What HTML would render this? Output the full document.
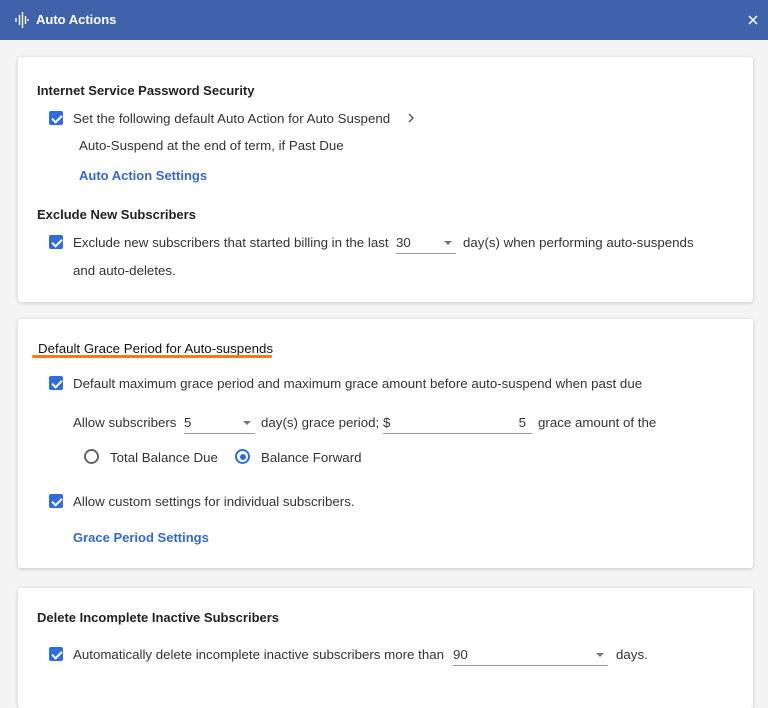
<!DOCTYPE html>
<html><head><style>
*{margin:0;padding:0;box-sizing:border-box}
body{width:768px;height:686px;overflow:hidden;background:#f4f4f4;font-family:"Liberation Sans",sans-serif;font-size:13.3px;color:#333;position:relative}
.hdr{position:absolute;left:0;top:0;width:768px;height:40px;background:#3f62aa;color:#fff}
.card{position:absolute;left:18px;width:735px;background:#fff;border-radius:3px;box-shadow:0 1px 4px rgba(0,0,0,.18)}
.a{position:absolute;white-space:nowrap}
.h{font-weight:bold;color:#222;font-size:13px}
.cb{position:absolute;width:14px;height:14px;background:#2f6ed8;border-radius:2px}
.cb:after{content:"";position:absolute;left:4.5px;top:1.5px;width:4px;height:8px;border:solid #fff;border-width:0 2px 2px 0;transform:rotate(45deg)}
.lnk{color:#3568d4;font-weight:bold;font-size:13px}
.sel{position:absolute;border-bottom:1px solid #999;height:22px}
.dd:after{content:"";position:absolute;right:4px;top:9px;border:4px solid transparent;border-top:4px solid #777;border-bottom:0}
</style></head><body>
<div class="hdr">
<svg class="a" style="left:15px;top:12px" width="14" height="16" viewBox="0 0 14 16"><g stroke="#fff" stroke-width="1.4"><line x1="1" y1="6" x2="1" y2="10"/><line x1="4.5" y1="3" x2="4.5" y2="13"/><line x1="7.5" y1="0" x2="7.5" y2="16"/><line x1="10.5" y1="4" x2="10.5" y2="12"/><line x1="13" y1="7" x2="13" y2="9"/></g></svg>
<div class="a" style="left:36px;top:12px;font-weight:bold;font-size:13px">Auto Actions</div>
<svg class="a" style="left:748px;top:15px" width="10" height="10"><path d="M1 1L9 9M9 1L1 9" stroke="#fff" stroke-width="1.5"/></svg>
</div>

<div class="card" style="top:57px;height:245px"></div>
<div class="a h" style="left:37px;top:83px">Internet Service Password Security</div>
<div class="cb" style="left:49px;top:111px"></div>
<div class="a" style="left:73px;top:111px">Set the following default Auto Action for Auto Suspend</div>
<svg class="a" style="left:407px;top:113px" width="8" height="10"><path d="M2 1L6 5L2 9" stroke="#555" stroke-width="1.4" fill="none"/></svg>
<div class="a" style="left:79px;top:138px">Auto-Suspend at the end of term, if Past Due</div>
<div class="a lnk" style="left:79px;top:168px">Auto Action Settings</div>
<div class="a h" style="left:37px;top:207px">Exclude New Subscribers</div>
<div class="cb" style="left:49px;top:235px"></div>
<div class="a" style="left:73px;top:235px">Exclude new subscribers that started billing in the last</div>
<div class="sel dd" style="left:396px;top:232px;width:60px"><span style="position:absolute;left:0;top:3px">30</span></div>
<div class="a" style="left:463px;top:235px">day(s) when performing auto-suspends</div>
<div class="a" style="left:73px;top:263px">and auto-deletes.</div>

<div class="card" style="top:319px;height:249px"></div>
<div class="a" style="left:38px;top:341px;color:#111">Default Grace Period for Auto-suspends</div>
<div class="a" style="left:32px;top:355px;width:240px;height:3px;background:#f07c1e;border-radius:2px"></div>
<div class="cb" style="left:49px;top:376px"></div>
<div class="a" style="left:73px;top:376px">Default maximum grace period and maximum grace amount before auto-suspend when past due</div>
<div class="a" style="left:73px;top:415px">Allow subscribers</div>
<div class="sel dd" style="left:184px;top:412px;width:71px"><span style="position:absolute;left:0;top:3px">5</span></div>
<div class="a" style="left:261px;top:415px">day(s) grace period;</div>
<div class="sel" style="left:383px;top:412px;width:149px"><span style="position:absolute;left:0;top:3px">$</span><span style="position:absolute;right:6px;top:3px">5</span></div>
<div class="a" style="left:538px;top:415px">grace amount of the</div>
<div class="a" style="left:84px;top:449px;width:15px;height:15px;border:2px solid #666;border-radius:50%"></div>
<div class="a" style="left:110px;top:450px">Total Balance Due</div>
<div class="a" style="left:235px;top:449px;width:15px;height:15px;border:2px solid #2f6ed8;border-radius:50%"><div style="position:absolute;left:2.5px;top:2.5px;width:6px;height:6px;background:#2f6ed8;border-radius:50%"></div></div>
<div class="a" style="left:261px;top:450px">Balance Forward</div>
<div class="cb" style="left:49px;top:494px"></div>
<div class="a" style="left:73px;top:494px">Allow custom settings for individual subscribers.</div>
<div class="a lnk" style="left:73px;top:530px">Grace Period Settings</div>

<div class="card" style="top:588px;height:120px"></div>
<div class="a h" style="left:37px;top:610px">Delete Incomplete Inactive Subscribers</div>
<div class="cb" style="left:49px;top:647px"></div>
<div class="a" style="left:73px;top:647px">Automatically delete incomplete inactive subscribers more than</div>
<div class="sel dd" style="left:453px;top:644px;width:155px"><span style="position:absolute;left:0;top:3px">90</span></div>
<div class="a" style="left:616px;top:647px">days.</div>
</body></html>
